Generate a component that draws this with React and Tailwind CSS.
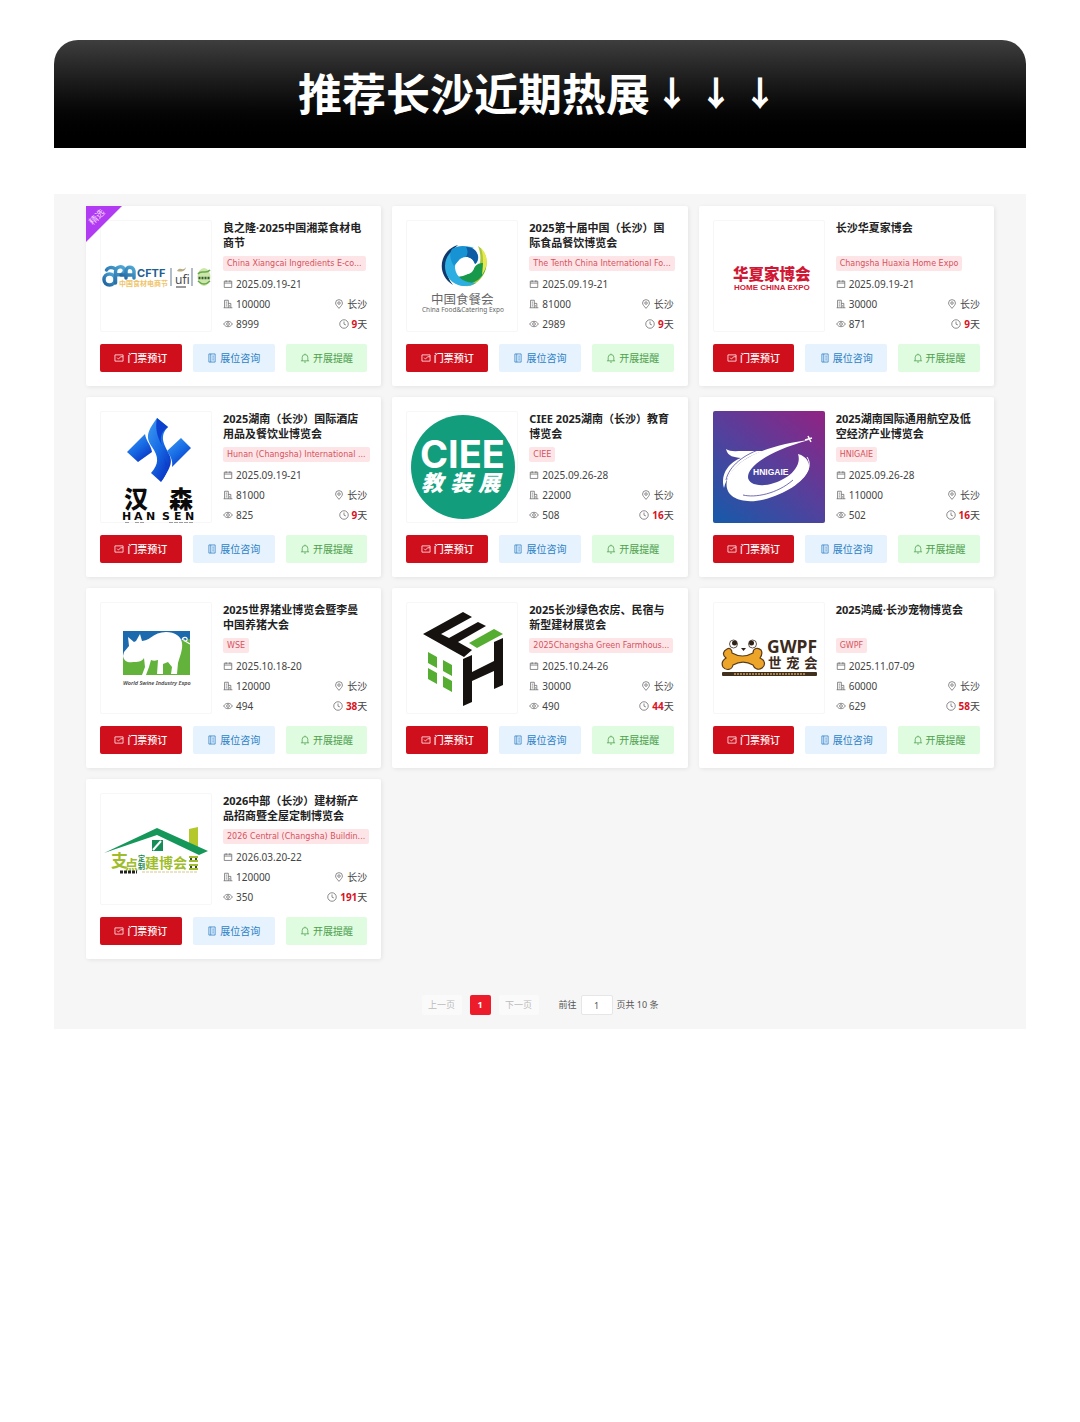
import React, { useState } from 'react';

const SANS = "'Noto Sans', 'Noto Sans CJK SC', sans-serif";
const CJK = "'Noto Sans CJK SC', sans-serif";

const icons = {
    calendar: <path d="M2 3.5h12v10H2zM2 6.5h12M5 2v3M11 2v3" />,
    building: <path d="M2.500 14V2h6v12M8.500 7h4v7M1 14h14M4.500 5h2M4.500 8h2M4.500 11h2M10.500 10v2" />,
    eye: (
        <>
            <path d="M1 8c2-3 4.300-4.300 7-4.300S13 5 15 8c-2 3-4.300 4.300-7 4.300S3 11 1 8z" />
            <circle cx="8" cy="8" r="2.200" />
        </>
    ),
    pin: (
        <>
            <path d="M8 15C5 11.500 2.500 9 2.500 6.500a5.500 5.500 0 0111 0C13.500 9 11 11.500 8 15z" />
            <circle cx="8" cy="6.500" r="2" />
        </>
    ),
    clock: (
        <>
            <circle cx="8" cy="8" r="6.800" />
            <path d="M8 4v4.300l3 1.200" />
        </>
    ),
    ticket: <path d="M1.500 3h13v10h-13zM5 7.500l2 2 4-3.500h3.500" />,
    notebook: <path d="M3 1.500h10v13H3zM6 1.500v13M8.500 5H11M8.500 8H11M8.500 11H11" />,
    bell: <path d="M1.500 12.500h13M3.500 12.500V7a4.500 4.500 0 019 0v5.500M6.500 14.500h3M8 1v1.500" />,
};

function Icon({ name, className = '' }) {
    return (
        <svg className={`h-[10px] w-[10px] shrink-0 ${className}`} viewBox="0 0 16 16" fill="none" stroke="currentColor" strokeWidth="1.2" aria-hidden="true">
            {icons[name]}
        </svg>
    );
}

function CftfLogo() {
    return (
        <>
            <defs>
                <linearGradient id="cftf" x1="0" y1="1" x2="1" y2="0">
                    <stop offset="0" stopColor="#1d5f9d" />
                    <stop offset="1" stopColor="#4fa9d6" />
                </linearGradient>
            </defs>
            <g fill="none" stroke="url(#cftf)" strokeWidth="3.5" strokeLinecap="round">
                <circle cx="9.500" cy="59.500" r="5.500" />
                <path d="M15.500 63V52c0-6 8-7 9-2 0 4-4 6-9 4M15.500 49c-4-3-8-1-9 1" />
                <path d="M21 55h13M26 58v-7c0-5 7-5 8 0v7" />
            </g>
            <text x="37" y="57" fontSize="11" fontWeight="700" fill="#1f5f91" fontFamily="Inter, sans-serif">CFTF</text>
            <text x="19" y="66" fontSize="7" fontWeight="700" fill="#f0c46a" fontFamily={CJK}>中国食材电商节</text>
            <path d="M71 48v18M92 48v18" stroke="#7d92a6" strokeWidth="1.200" />
            <path d="M77 51c3-5 6 1 9-4-1 5-5 5-9 4z" fill="#b9ad83" />
            <text x="75" y="64" fontSize="12" fill="#4a4a4a" fontFamily={SANS}>ufi</text>
            <path d="M76 67h10" stroke="#777" strokeWidth="1.500" />
            <ellipse cx="104" cy="57" rx="6.500" ry="9" fill="#cde6a9" />
            <path d="M98 54c3-5 8 1 12-4M98 61c4 4 8 4 12 0" fill="none" stroke="#66a94e" strokeWidth="1.500" />
            <path d="M98.500 58h11" stroke="#315d31" strokeWidth="2.500" strokeDasharray="2 1" />
        </>
    );
}

function FoodLogo() {
    return (
        <>
            <path d="M52 25C34 30 29 54 47 65 37 54 39 35 52 25z" fill="#10386a" />
            <path d="M72 26c14 9 11 33-8 40-11 1-19-4-23-12 12 7 31 3 33-11 1-7 0-12-2-17z" fill="#a9c83a" />
            <path d="M80 43c1 18-22 29-37 14 12 1 20-2 25-9 4-6 8-5 12-5z" fill="#17984a" />
            <path d="M68 28C55 23 39 31 39 46c0 12 9 20 20 20 5 0 8-1 11-3-12 0-20-6-21-15 0-10 8-18 19-20z" fill="#2caee2" />
            <path d="M46 29c9-6 23-3 26 7 1 3-1 7-3 8-2-7-9-9-15-5l-6 7c-4-6-5-12-2-17z" fill="#1793d3" />
            <path d="M60 27c8 0 12 5 12 10 0 3-1 6-3 7-2-5-5-7-9-7 2-3 2-7 0-10z" fill="#0e5ca4" />
            <circle cx="60" cy="46" r="8.500" fill="#fff" />
            <path d="M75 28c8 8 7 19 1 27 1-10 2-18-1-27z" fill="#e6e94e" />
            <text x="25" y="84" fontSize="12.500" fill="#666" fontFamily={CJK}>中国食餐会</text>
            <text x="16" y="92" fontSize="6.500" fill="#666" fontFamily={SANS}>China Food&amp;Catering Expo</text>
        </>
    );
}

function HomeLogo() {
    return (
        <>
            <text x="20" y="60" fontSize="15.500" fontWeight="900" fill="#d01835" fontFamily={CJK}>华夏家博会</text>
            <text x="21" y="70" fontSize="8" fontWeight="700" fill="#d01835" fontFamily="'Liberation Sans', sans-serif">HOME CHINA EXPO</text>
        </>
    );
}

function HansenLogo() {
    return (
        <>
            <defs>
                <linearGradient id="hansen" x1="0" y1="0" x2="0.700" y2="1">
                    <stop offset="0" stopColor="#3f9cf4" />
                    <stop offset="0.550" stopColor="#176be4" />
                    <stop offset="1" stopColor="#0a34c4" />
                </linearGradient>
            </defs>
            <g fill="url(#hansen)">
                <path d="M27 41l18-18c1 7 6 11 7 18L38 51z" />
                <path d="M57 7l11 9c-9 9-4 17 0 25 5 9 4 14-7 30L51 62c8-9 8-16 1-26-6-9-6-14 5-29z" />
                <path d="M81 27l10 10-19 19c1-6-1-10-5-16z" />
            </g>
            <path d="M57 7l11 9c-6 4-9 10-6 18-5-8-7-17-5-27zM61 71c4-9 6-16 3-24 5 8 5 13-3 24z" fill="#0c41cf" />
            <g fontSize="24" fontWeight="900" fill="#0b0b0b" fontFamily={CJK}>
                <text x="24" y="97">汉</text>
                <text x="69" y="97">森</text>
            </g>
            <g fontSize="11" fontWeight="700" fill="#0b0b0b" fontFamily="'DejaVu Sans', sans-serif">
                <text x="22" y="109">H</text>
                <text x="34" y="109">A</text>
                <text x="46" y="109">N</text>
                <text x="62" y="109">S</text>
                <text x="74" y="109">E</text>
                <text x="85" y="109">N</text>
            </g>
            <path d="M25 112h4M35 112h9M69 112h25" stroke="#444" strokeWidth="1" strokeDasharray="4 1" />
        </>
    );
}

function CieeLogo() {
    return (
        <>
            <circle cx="57" cy="56" r="52" fill="#129e7c" />
            <text x="14" y="57" fontSize="38" fontWeight="700" fill="#fff" fontFamily="Inter, sans-serif">CIEE</text>
            <g fontSize="22" fontWeight="900" fontStyle="italic" fill="#fff" fontFamily={CJK}>
                <text x="15" y="80">教</text>
                <text x="44" y="80">装</text>
                <text x="72" y="80">展</text>
            </g>
        </>
    );
}

function HnigaieLogo() {
    return (
        <>
            <defs>
                <linearGradient id="hnigaie" x1="0.100" y1="1" x2="0.900" y2="0">
                    <stop offset="0" stopColor="#1b58a8" />
                    <stop offset="0.500" stopColor="#55409c" />
                    <stop offset="1" stopColor="#8c2585" />
                </linearGradient>
            </defs>
            <rect width="112" height="112" rx="2" fill="url(#hnigaie)" />
            <path d="M13 38c4 3 10 2 17 2h21C32 45 16 58 11 77 7 62 17 51 28 47c-7-1-13-1-15-9z" fill="#fff" />
            <path d="M96 29C66 33 28 42 15 66c-8 22 18 30 44 20 22-7 42-24 36-35-1-4-6-7-10-8 4 12-8 24-24 29-14 5-26 1-26-6 0-10 18-25 61-37z" fill="#fff" />
            <path d="M94 46c9 13-10 31-36 39-10 3-20 3-27 1" fill="none" stroke="#fff" strokeWidth="1" />
            <path d="M51 37c-20 6-35 18-38 32M30 84c12 3 34-1 50-15" fill="none" stroke="#4d479f" strokeWidth="0.800" />
            <path d="M92 29l7-2M95 25l3 6" stroke="#fff" strokeWidth="1.500" />
            <text x="40" y="64" fontSize="8.500" fontWeight="700" fill="#fff" fontFamily="'Liberation Sans', sans-serif">HNIGAIE</text>
        </>
    );
}

function SwineLogo() {
    return (
        <>
            <rect x="23" y="29" width="67" height="44" fill="#62b23c" />
            <path d="M23 29h67v8c-15 3-30 2-42 12-8 6-17 1-25 6z" fill="#1b6aae" />
            <path d="M23 54l1-4 5-6-1-9 6 5 2-1 4-7 2 7c4-1 5-1 8-3 5-4 10-6 16-6 9 0 15 4 16 11 1 6-2 13-4 20l-1 11h-6l1-7-4-5-5 2v10h-6l1-14c-3 1-5 1-7 0l-2 7-3 8h-4l3-8-1-9c-2 4-7 4-11 4-4 1-9 0-10-6z" fill="#fff" />
            <path d="M82 38c1-4 6-3 5 0-1 2-4 1-3-1M85 39l5 3" fill="none" stroke="#fff" strokeWidth="1.200" />
            <text x="23" y="83" fontSize="5.500" fontWeight="600" fontStyle="italic" fill="#454545" fontFamily={SANS}>World Swine Industry Expo</text>
        </>
    );
}

function FarmhouseLogo() {
    return (
        <>
            <g fill="#15120f">
                <path d="M17 32l40-22 9 5-31 17 8 4 29-16 8 4-28 16 14 8-8 7z" />
                <path d="M57 57l9-4v17l22-11V40l9-4v47l-9 4V69L66 79v21l-9 4z" />
            </g>
            <g fill="#55ad31">
                <path d="M63 41l25-14 9 5-26 14z" />
                <path d="M22 50l9 5v11l-9-5zM37 58l9 5v11l-9-5zM22 66l9 5v11l-9-5zM37 74l9 5v11l-9-5z" />
            </g>
        </>
    );
}

function PetLogo() {
    return (
        <>
            <path d="M14 47c3-2 5 1 5 4 7 4 14 4 21 0 0-5 5-6 8-3 2 3 1 5-1 8 5 2 6 7 2 10-4 3-8 0-9-3-7-4-13-4-20 0-1 5-7 6-10 2-2-4 0-7 3-9-4-3-3-7 1-9z" fill="#eda529" stroke="#5b3b19" strokeWidth="1.200" />
            <g fill="#fff" stroke="#3c2b1c" strokeWidth="0.800">
                <circle cx="20.500" cy="42" r="4" />
                <circle cx="39.500" cy="42" r="4" />
            </g>
            <g fill="#2e2117">
                <circle cx="21.500" cy="41" r="2.500" />
                <circle cx="38.500" cy="41" r="2.500" />
                <path d="M28 46h5l-2.500 3z" />
            </g>
            <text x="54" y="51" fontSize="17.500" fontWeight="700" fill="#3c2b1c" fontFamily={SANS}>GWPF</text>
            <g fontSize="13.500" fontWeight="700" fill="#3c2b1c" fontFamily={CJK}>
                <text x="55" y="66">世</text>
                <text x="73" y="66">宠</text>
                <text x="91" y="66">会</text>
            </g>
            <rect x="9" y="70" width="95" height="4" rx="1" fill="#42301f" />
            <path d="M21 72h71" stroke="#c79b5a" strokeWidth="1.500" strokeDasharray="2 1" />
        </>
    );
}

function BuildingLogo() {
    return (
        <>
            <path d="M89 36l9-2v22l-9-4z" fill="#b4c82b" />
            <path d="M4 60l53-25 51 23-9 4-42-20z" fill="#16975a" />
            <path d="M52 47h11v11H52z" fill="#168d58" />
            <path d="M53 57l8-9" stroke="#fff" strokeWidth="2" />
            <g fontWeight="700" fill="#9fbd2b" fontFamily={CJK}>
                <text x="11" y="74" fontSize="17">支</text>
                <text x="25" y="76" fontSize="13">点</text>
                <text x="45" y="75" fontSize="14">建博会</text>
            </g>
            <g fontSize="7" fontWeight="700" fill="#148552" fontFamily={CJK}>
                <text x="38" y="68">定</text>
                <text x="38" y="76">制</text>
            </g>
            <path d="M89 64h9M89 68h9M89 72h9M89 76h9" stroke="#9fbd2b" strokeWidth="2" />
            <path d="M90 66h2M95 66h2M90 74h2M95 74h2" stroke="#33502b" strokeWidth="2" />
            <path d="M20 79h17" stroke="#222" strokeWidth="3" strokeDasharray="3 1" />
            <path d="M42 79h55" stroke="#d5c98e" strokeWidth="1" strokeDasharray="3 1" />
        </>
    );
}

const expos = [
    { title: '良之隆·2025中国湘菜食材电商节', tag: 'China Xiangcai Ingredients E-co...', date: '2025.09.19-21', area: '100000', views: '8999', days: 9, logo: CftfLogo, featured: true },
    { title: '2025第十届中国（长沙）国际食品餐饮博览会', tag: 'The Tenth China International Fo...', date: '2025.09.19-21', area: '81000', views: '2989', days: 9, logo: FoodLogo },
    { title: '长沙华夏家博会', tag: 'Changsha Huaxia Home Expo', date: '2025.09.19-21', area: '30000', views: '871', days: 9, logo: HomeLogo },
    { title: '2025湖南（长沙）国际酒店用品及餐饮业博览会', tag: 'Hunan (Changsha) International ...', date: '2025.09.19-21', area: '81000', views: '825', days: 9, logo: HansenLogo },
    { title: 'CIEE 2025湖南（长沙）教育博览会', tag: 'CIEE', date: '2025.09.26-28', area: '22000', views: '508', days: 16, logo: CieeLogo },
    { title: '2025湖南国际通用航空及低空经济产业博览会', tag: 'HNIGAIE', date: '2025.09.26-28', area: '110000', views: '502', days: 16, logo: HnigaieLogo },
    { title: '2025世界猪业博览会暨李曼中国养猪大会', tag: 'WSE', date: '2025.10.18-20', area: '120000', views: '494', days: 38, logo: SwineLogo },
    { title: '2025长沙绿色农房、民宿与新型建材展览会', tag: '2025Changsha Green Farmhous...', date: '2025.10.24-26', area: '30000', views: '490', days: 44, logo: FarmhouseLogo },
    { title: '2025鸿威·长沙宠物博览会', tag: 'GWPF', date: '2025.11.07-09', area: '60000', views: '629', days: 58, logo: PetLogo },
    { title: '2026中部（长沙）建材新产品招商暨全屋定制博览会', tag: '2026 Central (Changsha) Buildin...', date: '2026.03.20-22', area: '120000', views: '350', days: 191, logo: BuildingLogo },
];

function Meta({ icon, children }) {
    return (
        <span className="flex items-center gap-[3px]">
            <Icon name={icon} className="text-[#666]" />
            <span>{children}</span>
        </span>
    );
}

function ExpoCard({ expo }) {
    const Logo = expo.logo;
    return (
        <article className="relative rounded-[2px] bg-white p-[14px] shadow-[1px_1px_4px_rgba(0,0,0,0.08)]">
            {expo.featured && (
                <div className="absolute top-0 left-0 h-9 w-9 overflow-hidden bg-[#b13bf2] [clip-path:polygon(0_0,100%_0,0_100%)]">
                    <span className="absolute top-[4px] left-[2px] -rotate-45 text-[9px] leading-[14px] text-[#f3d6ff]">精选</span>
                </div>
            )}
            <div className="flex gap-[11px]">
                <div className="h-28 w-28 shrink-0 rounded-[2px] border border-[#f7f7f7]">
                    <svg className="-m-px h-28 w-28 max-w-none" viewBox="0 0 112 112" role="img" aria-label={expo.title}>
                        <Logo />
                    </svg>
                </div>
                <div className="min-w-0 flex-1 text-[10px] text-[#444]">
                    <h2 className="mb-[6px] h-[30px] text-[11px] leading-[15px] font-bold text-[#222]">{expo.title}</h2>
                    <div className="mb-[3px] flex">
                        <span className="shrink-0 rounded-[2px] bg-[#fde5e7] px-1 font-['DejaVu_Sans',sans-serif] text-[8px] leading-[15px] whitespace-nowrap text-[#d6525e]">{expo.tag}</span>
                    </div>
                    <div className="flex h-5 items-center"><Meta icon="calendar">{expo.date}</Meta></div>
                    <div className="flex h-5 items-center justify-between">
                        <Meta icon="building">{expo.area}</Meta>
                        <Meta icon="pin">长沙</Meta>
                    </div>
                    <div className="flex h-5 items-center justify-between">
                        <Meta icon="eye">{expo.views}</Meta>
                        <Meta icon="clock"><b className="text-[#d81324]">{expo.days}</b>天</Meta>
                    </div>
                </div>
            </div>
            <div className="mt-[10px] grid grid-cols-3 gap-[11px] text-[10px]">
                <button className="flex h-7 items-center justify-center gap-[3px] rounded-[2px] bg-[#d00f1d] font-medium text-white">
                    <Icon name="ticket" />门票预订
                </button>
                <button className="flex h-7 items-center justify-center gap-[3px] rounded-[2px] bg-[#e6f2fe] text-[#2b7fc4]">
                    <Icon name="notebook" />展位咨询
                </button>
                <button className="flex h-7 items-center justify-center gap-[3px] rounded-[2px] bg-[#dffbe0] text-[#4da04d]">
                    <Icon name="bell" />开展提醒
                </button>
            </div>
        </article>
    );
}

function Pagination() {
    const [page, setPage] = useState('1');

    return (
        <nav className="mt-9 flex h-5 items-center justify-center text-[9px] text-[#555]" aria-label="分页">
            <button className="mr-2 h-5 w-10 rounded-[2px] bg-[#fafafa] text-[#bbb]" disabled>上一页</button>
            <button className="mr-2 h-5 w-[21px] rounded-[2px] bg-[#ec1c2b] font-bold text-white" aria-current="page">1</button>
            <button className="mr-5 h-5 w-10 rounded-[2px] bg-[#fafafa] text-[#bbb]" disabled>下一页</button>
            <label htmlFor="page">前往</label>
            <input
                id="page"
                className="mx-1 h-5 w-8 rounded-[2px] border border-[#e6e6e6] bg-white text-center"
                value={page}
                onChange={(e) => setPage(e.target.value)}
            />
            <span>页共 10 条</span>
        </nav>
    );
}

export default function App() {
    return (
        <main className="px-[5%] pt-10 font-['Noto_Sans','Noto_Sans_CJK_SC',sans-serif]">
            <header className="flex h-[108px] items-center justify-center rounded-t-3xl bg-linear-to-b from-[#3e3e3e] to-black pb-1">
                <h1 className="flex items-center font-['Noto_Sans_CJK_SC',sans-serif] text-[44px] leading-none font-bold text-white">
                    <span>推荐长沙近期热展</span>
                    <span className="flex text-[34px] font-black">
                        <span className="w-11 text-center">↓</span>
                        <span className="w-11 text-center">↓</span>
                        <span className="w-11 text-center">↓</span>
                    </span>
                </h1>
            </header>
            <section className="mt-[46px] bg-[#f6f6f6] px-8 pt-3 pb-[14px]">
                <div className="grid grid-cols-3 gap-[11px]">
                    {expos.map((expo) => (
                        <ExpoCard key={expo.title} expo={expo} />
                    ))}
                </div>
                <Pagination />
            </section>
        </main>
    );
}
